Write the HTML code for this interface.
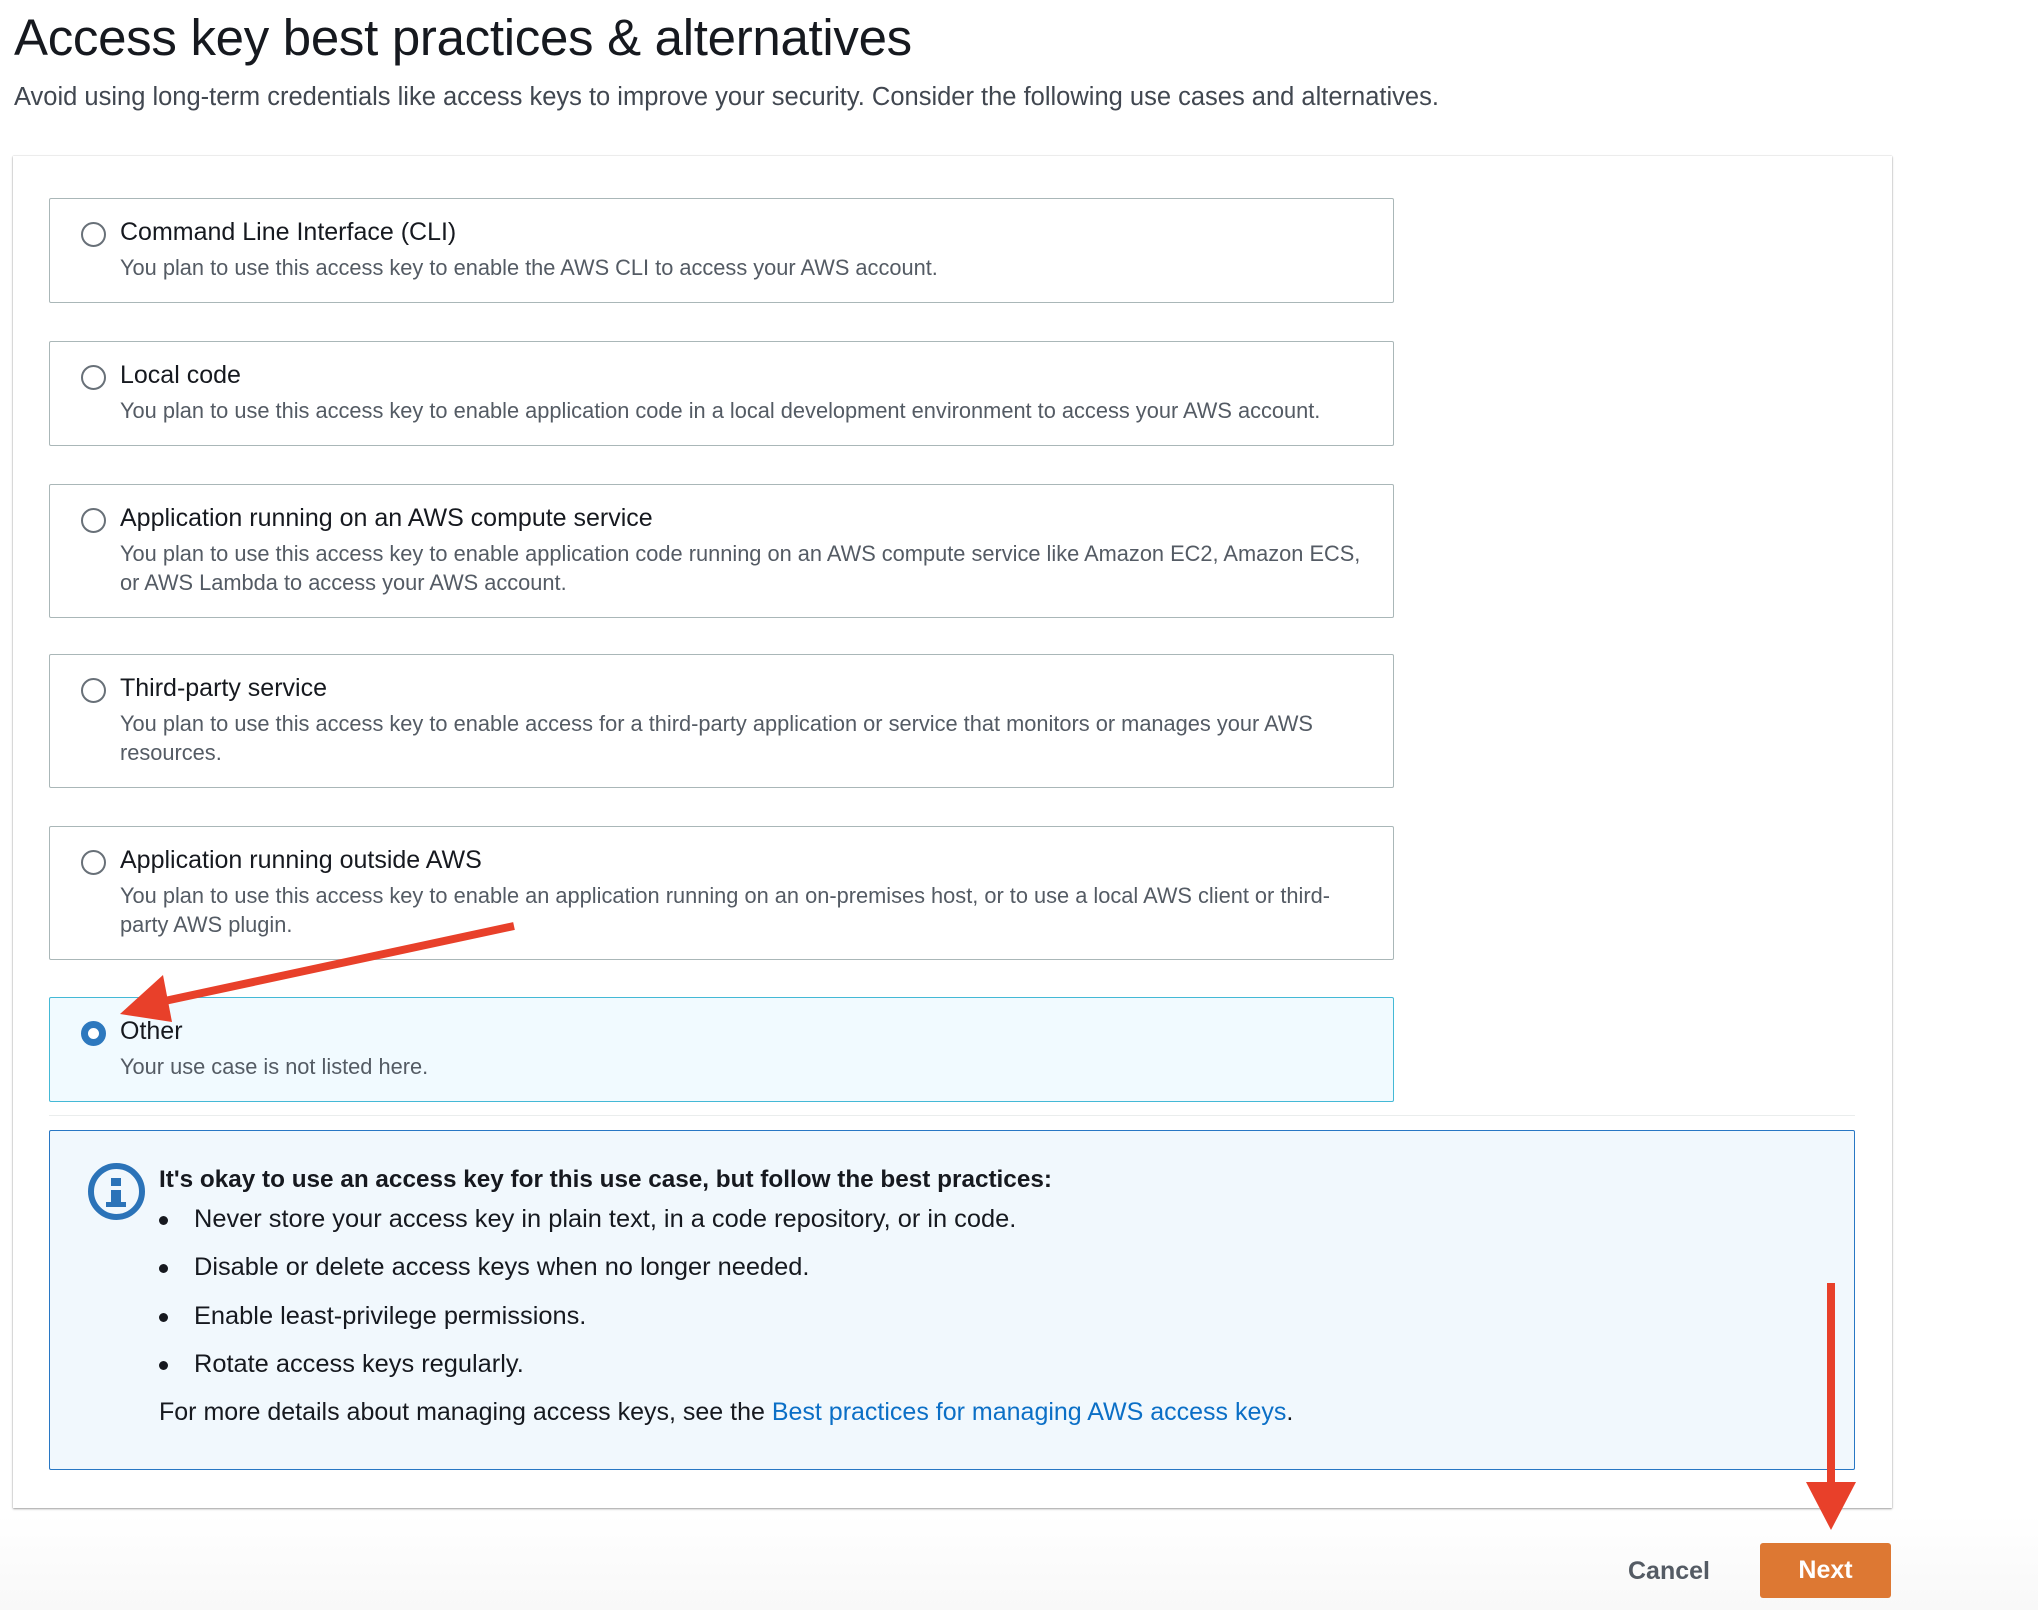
<!DOCTYPE html>
<html><head><meta charset="utf-8"><style>
*{box-sizing:border-box;margin:0;padding:0}
body{width:2038px;height:1610px;background:#fff;font-family:"Liberation Sans",sans-serif;color:#16191f;position:relative;overflow:hidden}
.a{position:absolute}
h1{position:absolute;left:14px;top:8px;font-size:51px;font-weight:400;letter-spacing:-0.3px;white-space:nowrap}
.sub{left:14px;top:83px;font-size:25.5px;color:#414750;white-space:nowrap}
.panel{left:13px;top:156px;width:1879px;height:1352px;background:#fff;box-shadow:0 1px 2px rgba(0,0,0,.35),0 0 1px rgba(0,0,0,.25)}
.card{position:absolute;left:49px;width:1345px;border:1px solid #aab7b8;border-radius:2px;background:#fff}
.card.sel{background:#f1faff;border-color:#44b9d6}
.r{position:absolute;left:31px;top:23px;width:25px;height:25px;border:2px solid #687078;border-radius:50%;background:#fff}
.sel .r{border:7px solid #2d78be}
.lb{position:absolute;left:70px;top:19px;font-size:25px;white-space:nowrap}
.ds{position:absolute;left:70px;top:54px;font-size:21.8px;color:#545b64;line-height:29px;white-space:nowrap}
.info{left:49px;top:1130px;width:1806px;height:340px;border:1px solid #2877c4;border-radius:2px;background:#f1f8fd}
.ic{left:88px;top:1163px;width:57px;height:57px;border:6px solid #2b73b8;border-radius:50%}
.t{position:absolute;white-space:nowrap;font-size:25.4px}
.dot{position:absolute;left:159px;width:9px;height:9px;border-radius:50%;background:#16191f}
</style></head><body>
<h1>Access key best practices &amp; alternatives</h1>
<div class="a sub">Avoid using long-term credentials like access keys to improve your security. Consider the following use cases and alternatives.</div>
<div class="a panel"></div>

<div class="card" style="top:198px;height:105px"><div class="r"></div><div class="lb">Command Line Interface (CLI)</div><div class="ds">You plan to use this access key to enable the AWS CLI to access your AWS account.</div></div>
<div class="card" style="top:341px;height:105px"><div class="r"></div><div class="lb">Local code</div><div class="ds">You plan to use this access key to enable application code in a local development environment to access your AWS account.</div></div>
<div class="card" style="top:484px;height:134px"><div class="r"></div><div class="lb">Application running on an AWS compute service</div><div class="ds">You plan to use this access key to enable application code running on an AWS compute service like Amazon EC2, Amazon ECS,<br>or AWS Lambda to access your AWS account.</div></div>
<div class="card" style="top:654px;height:134px"><div class="r"></div><div class="lb">Third-party service</div><div class="ds">You plan to use this access key to enable access for a third-party application or service that monitors or manages your AWS<br>resources.</div></div>
<div class="card" style="top:826px;height:134px"><div class="r"></div><div class="lb">Application running outside AWS</div><div class="ds">You plan to use this access key to enable an application running on an on-premises host, or to use a local AWS client or third-<br>party AWS plugin.</div></div>
<div class="card sel" style="top:997px;height:105px"><div class="r"></div><div class="lb">Other</div><div class="ds">Your use case is not listed here.</div></div>

<div class="a" style="left:49px;top:1115px;width:1806px;height:1px;background:#eaeded"></div>
<div class="a info"></div>
<div class="a ic"></div>
<div class="a" style="left:111px;top:1178px;width:10px;height:8px;background:#2b73b8"></div>
<div class="a" style="left:111px;top:1190px;width:10px;height:16px;background:#2b73b8"></div>
<div class="a" style="left:106px;top:1202px;width:20px;height:5px;background:#2b73b8"></div>
<div class="t" style="left:159px;top:1166px;font-weight:700;font-size:24.3px">It's okay to use an access key for this use case, but follow the best practices:</div>
<div class="dot" style="top:1216px"></div><div class="t" style="left:194px;top:1205px">Never store your access key in plain text, in a code repository, or in code.</div>
<div class="dot" style="top:1264px"></div><div class="t" style="left:194px;top:1253px">Disable or delete access keys when no longer needed.</div>
<div class="dot" style="top:1313px"></div><div class="t" style="left:194px;top:1302px">Enable least-privilege permissions.</div>
<div class="dot" style="top:1361px"></div><div class="t" style="left:194px;top:1350px">Rotate access keys regularly.</div>
<div class="t" style="left:159px;top:1398px;font-size:25px">For more details about managing access keys, see the <span style="color:#0b6fc6">Best practices for managing AWS access keys</span>.</div>

<div class="a" style="left:0;top:1515px;width:2038px;height:95px;background:linear-gradient(#fff,#f8f8f8)"></div>
<div class="t" style="left:1628px;top:1557px;font-weight:700;color:#545b64;font-size:25px">Cancel</div>
<div class="a" style="left:1760px;top:1543px;width:131px;height:55px;background:#dd7833;border-radius:3px;color:#fff;font-weight:700;font-size:25px;text-align:center;line-height:55px">Next</div>

<svg class="a" style="left:0;top:0" width="2038" height="1610">
<line x1="514" y1="926" x2="160" y2="1002" stroke="#e8402a" stroke-width="8"/>
<polygon points="120,1014 163,975 172,1022" fill="#e8402a"/>
<line x1="1831" y1="1283" x2="1831" y2="1490" stroke="#e8402a" stroke-width="8"/>
<polygon points="1806,1482 1856,1482 1831,1530" fill="#e8402a"/>
</svg>
</body></html>
